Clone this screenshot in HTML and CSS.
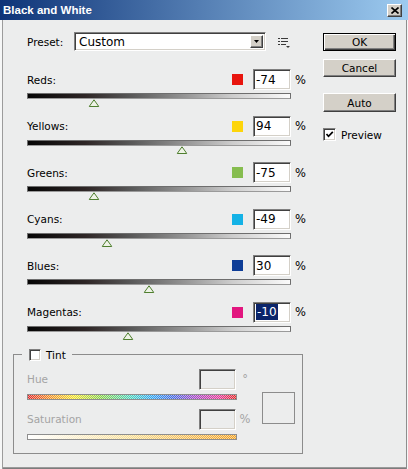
FILE: index.html
```html
<!DOCTYPE html>
<html>
<head>
<meta charset="utf-8">
<title>Black and White</title>
<link rel="stylesheet" href="styles.css">
</head>
<body>
<div class="win">
  <div class="title">
    <span class="title-text">Black and White</span>
    <span class="close"><svg width="8" height="7" viewBox="0 0 8 7"><path d="M0.5 0.5 L7.5 6.5 M7.5 0.5 L0.5 6.5" stroke="#000" stroke-width="1.6" fill="none"/></svg></span>
  </div>
  <div class="content">
    <div class="left">
      <div class="preset">
        <span class="preset-lbl">Preset:</span>
        <div class="select">
          <span class="select-text">Custom</span>
          <span class="select-btn"><svg width="5" height="3" viewBox="0 0 5 3"><path d="M0 0 H5 L2.5 3 Z" fill="#000"/></svg></span>
        </div>
        <svg class="menu-icon" width="13" height="11" viewBox="0 0 13 11"><g fill="#3a3a3a"><rect x="0" y="0" width="2" height="1"/><rect x="3" y="0" width="7" height="1"/><rect x="0" y="3" width="2" height="1"/><rect x="3" y="3" width="7" height="1"/><rect x="0" y="6" width="2" height="1"/><rect x="3" y="6" width="5" height="1"/><path d="M8 8 H12 L10 10 Z"/></g></svg>
      </div>

      <div class="row">
        <div class="row-head"><span class="lbl">Reds:</span><span class="swatch sw-red"></span><span class="field">-74</span><span class="pct">%</span></div>
        <div class="track"><span class="thumb" style="left:25.2%"><svg width="11" height="8" viewBox="0 0 11 8"><path d="M5.5 0.8 L10.3 7.5 H0.7 Z" fill="#eef3e6" stroke="#4f7f2f"/></svg></span></div>
      </div>
      <div class="row">
        <div class="row-head"><span class="lbl">Yellows:</span><span class="swatch sw-yellow"></span><span class="field">94</span><span class="pct">%</span></div>
        <div class="track"><span class="thumb" style="left:58.8%"><svg width="11" height="8" viewBox="0 0 11 8"><path d="M5.5 0.8 L10.3 7.5 H0.7 Z" fill="#eef3e6" stroke="#4f7f2f"/></svg></span></div>
      </div>
      <div class="row">
        <div class="row-head"><span class="lbl">Greens:</span><span class="swatch sw-green"></span><span class="field">-75</span><span class="pct">%</span></div>
        <div class="track"><span class="thumb" style="left:25%"><svg width="11" height="8" viewBox="0 0 11 8"><path d="M5.5 0.8 L10.3 7.5 H0.7 Z" fill="#eef3e6" stroke="#4f7f2f"/></svg></span></div>
      </div>
      <div class="row">
        <div class="row-head"><span class="lbl">Cyans:</span><span class="swatch sw-cyan"></span><span class="field">-49</span><span class="pct">%</span></div>
        <div class="track"><span class="thumb" style="left:30.2%"><svg width="11" height="8" viewBox="0 0 11 8"><path d="M5.5 0.8 L10.3 7.5 H0.7 Z" fill="#eef3e6" stroke="#4f7f2f"/></svg></span></div>
      </div>
      <div class="row">
        <div class="row-head"><span class="lbl">Blues:</span><span class="swatch sw-blue"></span><span class="field">30</span><span class="pct">%</span></div>
        <div class="track"><span class="thumb" style="left:46%"><svg width="11" height="8" viewBox="0 0 11 8"><path d="M5.5 0.8 L10.3 7.5 H0.7 Z" fill="#eef3e6" stroke="#4f7f2f"/></svg></span></div>
      </div>
      <div class="row">
        <div class="row-head"><span class="lbl">Magentas:</span><span class="swatch sw-magenta"></span><span class="field"><span class="sel">-10</span></span><span class="pct">%</span></div>
        <div class="track"><span class="thumb" style="left:38%"><svg width="11" height="8" viewBox="0 0 11 8"><path d="M5.5 0.8 L10.3 7.5 H0.7 Z" fill="#eef3e6" stroke="#4f7f2f"/></svg></span></div>
      </div>

      <fieldset class="tint">
        <legend><span class="cb cb-tint"></span><span class="tint-lbl">Tint</span></legend>
        <div class="tint-body">
          <div class="tint-left">
            <div class="trow"><span class="lbl">Hue</span><span class="dfield"></span><span class="unit">°</span></div>
            <div class="bar hue-bar"></div>
            <div class="trow sat-row"><span class="lbl">Saturation</span><span class="dfield"></span><span class="unit">%</span></div>
            <div class="bar sat-bar"></div>
          </div>
          <div class="color-box"></div>
        </div>
      </fieldset>
    </div>

    <div class="right">
      <div class="btn btn-default">OK</div>
      <div class="btn btn-cancel">Cancel</div>
      <div class="btn btn-auto">Auto</div>
      <div class="preview">
        <span class="cb cb-preview"><svg width="9" height="9" viewBox="0 0 9 9"><path d="M1.5 4 L3.5 6.3 L7.8 1.8" stroke="#000" stroke-width="1.7" fill="none"/></svg></span>
        <span class="preview-lbl">Preview</span>
      </div>
    </div>
  </div>
</div>
</body>
</html>
```

FILE: styles.css
```css
html, body {
  margin: 0;
  padding: 0;
}
body {
  background: #eceded;
  font-family: "DejaVu Sans", sans-serif;
  font-size: 10.5px;
  color: #000;
}
.win {
  width: 408px;
  height: 469px;
  display: flex;
  flex-direction: column;
  overflow: hidden;
  background: #eceded;
}
.title {
  height: 20px;
  flex: none;
  display: flex;
  align-items: center;
  justify-content: space-between;
  padding: 0 6px 0 3px;
  background: linear-gradient(to right, #0e3478, #9dcbf0);
  color: #fff;
  font: bold 11.5px "Liberation Sans", sans-serif;
}
.close {
  width: 15px;
  height: 13px;
  box-sizing: border-box;
  background: #d4d0c8;
  border: 1px solid;
  border-color: #fff #404040 #404040 #fff;
  box-shadow: inset -1px -1px 0 #808080;
  display: flex;
  align-items: center;
  justify-content: center;
}
.close svg { display: block; }
.content {
  flex: 1;
  display: flex;
  padding: 12px 0 0 13px;
  box-shadow: inset 2px 0 0 #f6f7f7, inset 3px 0 0 #9c9c9c,
    inset -1px 0 0 #f6f7f7, inset -2px 0 0 #8e8e8e,
    inset 0 -1px 0 #7c7c7c, inset 0 -2px 0 #9a9a9a;
}
.left {
  width: 297px;
  flex: none;
}
.preset {
  display: flex;
  align-items: center;
  height: 19px;
  margin-bottom: 18px;
  padding-left: 14px;
}
.preset-lbl { width: 47px; }
.select {
  width: 192px;
  height: 19px;
  box-sizing: border-box;
  border: 1px solid;
  border-color: #808080 #fff #fff #808080;
  box-shadow: inset 1px 1px 0 #404040, inset -1px -1px 0 #d4d0c8;
  background: #fff;
  display: flex;
  align-items: center;
  justify-content: space-between;
  padding: 0 2px 0 4px;
  font-size: 12px;
}
.select-btn {
  width: 13px;
  height: 13px;
  box-sizing: border-box;
  background: #d4d0c8;
  border: 1px solid;
  border-color: #fff #404040 #404040 #fff;
  box-shadow: inset -1px -1px 0 #808080;
  display: flex;
  align-items: center;
  justify-content: center;
}
.select-btn svg { display: block; }
.menu-icon {
  margin-left: 12px;
  margin-top: 4px;
  display: block;
}
.row {
  height: 46.6px;
  padding-left: 14px;
}
.row-head {
  display: flex;
  align-items: center;
  height: 21px;
  width: 278px;
}
.lbl { flex: 1; }
.swatch {
  width: 11px;
  height: 11px;
  margin-right: 10px;
}
.sw-red { background: #e8150e; }
.sw-yellow { background: #fdd50a; }
.sw-green { background: #86bd4f; }
.sw-cyan { background: #14b2e6; }
.sw-blue { background: #0e3d97; }
.sw-magenta { background: #e2167f; }
.field {
  width: 38px;
  height: 21px;
  box-sizing: border-box;
  border: 1px solid;
  border-color: #808080 #fff #fff #808080;
  box-shadow: inset 1px 1px 0 #404040, inset -1px -1px 0 #d4d0c8;
  background: #fff;
  font-size: 12px;
  padding-left: 2px;
  display: flex;
  align-items: center;
}
.sel {
  background: #0a246a;
  color: #fff;
  line-height: 16px;
  padding: 0 1px;
}
.pct {
  width: 10px;
  margin-left: 4px;
  font-size: 11.5px;
}
.track {
  position: relative;
  margin-top: 3px;
  width: 264px;
  height: 6px;
  box-sizing: border-box;
  border: 1px solid #6e6e6e;
  border-bottom-color: #9a9a9a;
  background: linear-gradient(to right, #050505, #2e2626 22%, #5a5a5a 40%, #8f8f8f 58%, #cdcdcd 78%, #fbfbfb);
}
.thumb {
  position: absolute;
  top: 5px;
  transform: translateX(-50%);
  line-height: 0;
}
.thumb svg { display: block; }

.tint {
  margin: 0;
  padding: 0;
  min-width: 0;
  width: 290px;
  box-sizing: border-box;
  border: 1px solid #8c8c8c;
}
.tint legend {
  margin-left: 8px;
  padding: 0 6px 0 7px;
  display: flex;
  align-items: center;
  height: 12px;
  line-height: 12px;
}
.cb {
  box-sizing: border-box;
  background: #fff;
  border: 1px solid;
  border-color: #808080 #fff #fff #808080;
  box-shadow: inset 1px 1px 0 #404040, inset -1px -1px 0 #d4d0c8;
  display: flex;
  align-items: center;
  justify-content: center;
}
.cb-tint { width: 12px; height: 12px; }
.tint-lbl { margin-left: 5px; }
.tint-body {
  display: flex;
  padding: 8px 0 13px 13px;
}
.tint-left {
  width: 227px;
  flex: none;
}
.trow {
  display: flex;
  align-items: center;
  height: 21px;
  color: #a4a4a4;
}
.dfield {
  width: 37px;
  height: 21px;
  box-sizing: border-box;
  border: 1px solid;
  border-color: #808080 #fff #fff #808080;
  box-shadow: inset 1px 1px 0 #404040, inset -1px -1px 0 #d4d0c8;
}
.unit {
  width: 18px;
  text-align: center;
  font-size: 11.5px;
}
.bar {
  width: 210px;
  height: 6px;
  margin-top: 4px;
  box-sizing: border-box;
  border: 1px solid #8e8e8e;
}
.hue-bar {
  background:
    repeating-conic-gradient(rgba(255,255,255,0.55) 0 25%, transparent 0 50%) 0 0 / 2px 2px,
    linear-gradient(to right, #e02424, #f08a22 10%, #f0e02a 22%, #86d046 35%, #46d0c0 50%, #2ea2f0 60%, #4466e0 70%, #a044c4 80%, #e23494 92%, #e02424);
}
.sat-bar {
  background:
    repeating-conic-gradient(rgba(255,255,255,0.55) 0 25%, transparent 0 50%) 0 0 / 2px 2px,
    linear-gradient(to right, #ffffff, #f6dc90 50%, #f0a020);
}
.sat-row { margin-top: 9px; }
.color-box {
  width: 33px;
  height: 32px;
  box-sizing: border-box;
  border: 1px solid #8c8c8c;
  margin: 23px 0 0 8px;
}

.right {
  margin-left: 13px;
  width: 73px;
  flex: none;
  display: flex;
  flex-direction: column;
  padding-top: 1px;
}
.btn {
  height: 18px;
  box-sizing: border-box;
  background: #d4d0c8;
  border: 1px solid;
  border-color: #fff #404040 #404040 #fff;
  box-shadow: inset -1px -1px 0 #808080;
  display: flex;
  align-items: center;
  justify-content: center;
}
.btn-default {
  border-color: #000;
  box-shadow: inset 1px 1px 0 #fff, inset -1px -1px 0 #404040, inset -2px -2px 0 #808080;
}
.btn-cancel { margin-top: 8px; }
.btn-auto { margin-top: 16px; height: 19px; }
.preview {
  margin-top: 16px;
  display: flex;
  align-items: center;
}
.cb-preview { width: 13px; height: 13px; }
.cb-preview svg { display: block; }
.preview-lbl { margin-left: 5px; }
```
